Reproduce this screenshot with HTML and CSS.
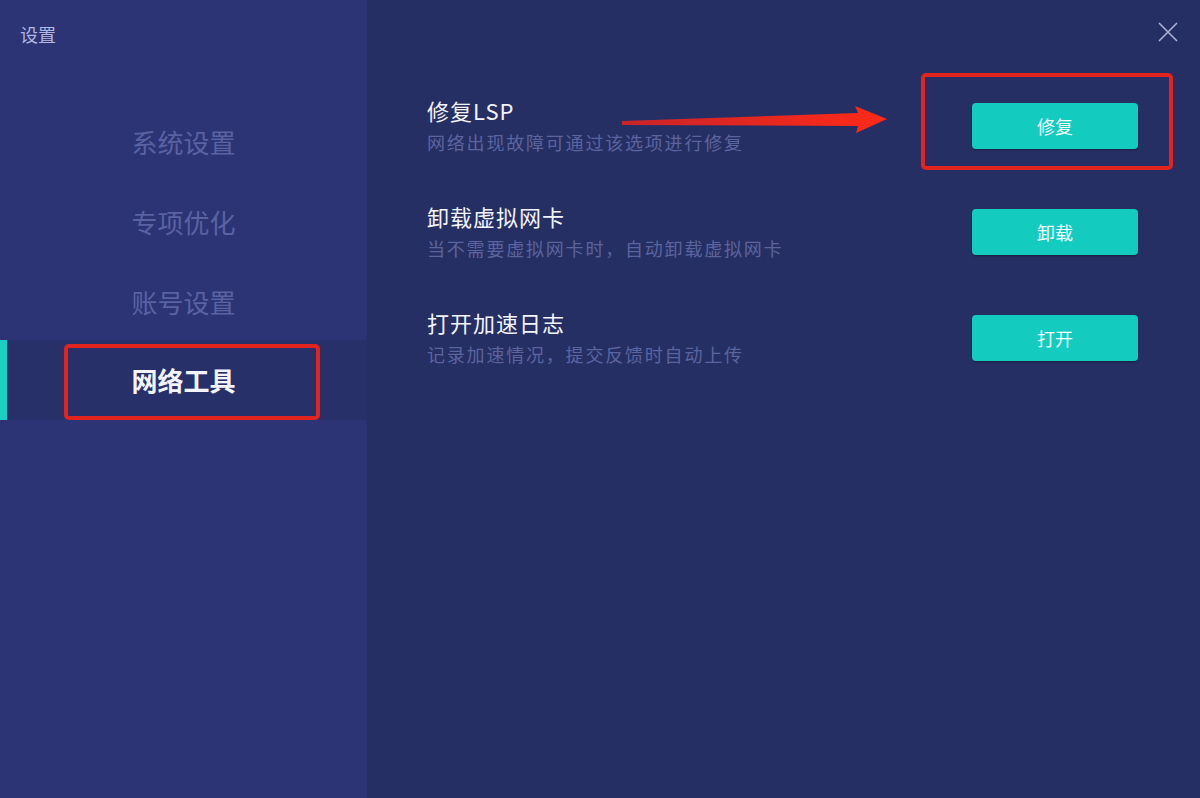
FILE: index.html
```html
<!DOCTYPE html>
<html>
<head>
  <meta charset="utf-8">
  <title>设置</title>
  <link rel="stylesheet" href="styles.css">
</head>
<body>
  <div id="window">
    <div class="sidebar">
      <div class="title">设置</div>
      <ul class="nav">
        <li>系统设置</li>
        <li>专项优化</li>
        <li>账号设置</li>
        <li class="active">网络工具<span class="mark"></span></li>
      </ul>
    </div>

    <div class="main">
      <div class="row">
        <div class="info">
          <h3>修复LSP</h3>
          <p>网络出现故障可通过该选项进行修复</p>
        </div>
        <div class="btn-wrap">
          <button>修复</button>
          <span class="mark mark-btn"></span>
        </div>
      </div>

      <div class="row">
        <div class="info">
          <h3>卸载虚拟网卡</h3>
          <p>当不需要虚拟网卡时，自动卸载虚拟网卡</p>
        </div>
        <div class="btn-wrap">
          <button>卸载</button>
        </div>
      </div>

      <div class="row">
        <div class="info">
          <h3>打开加速日志</h3>
          <p>记录加速情况，提交反馈时自动上传</p>
        </div>
        <div class="btn-wrap">
          <button>打开</button>
        </div>
      </div>

      <div class="close">
        <svg width="22" height="22" viewBox="0 0 22 22">
          <path d="M2 2 L20 20 M20 2 L2 20" stroke="#aeb2d8" stroke-width="1.6" fill="none"/>
        </svg>
      </div>
    </div>

    <!-- annotation arrow -->
    <svg class="arrow" width="1200" height="798" viewBox="0 0 1200 798">
      <defs>
        <linearGradient id="red" x1="0" y1="0" x2="1" y2="0">
          <stop offset="0" stop-color="#c8242a"/>
          <stop offset="1" stop-color="#ff2a18"/>
        </linearGradient>
      </defs>
      <polygon fill="url(#red)" points="622,121 858,113 855,106 887,119 856,133 858,126 622,125"/>
    </svg>
  </div>
</body>
</html>
```

FILE: styles.css
```css
body {
  margin: 0;
  font-family: "Noto Sans CJK SC", "Noto Sans", sans-serif;
  background: #262f63;
}
#window {
  position: relative;
  display: flex;
  width: 1200px;
  height: 798px;
  overflow: hidden;
}
.sidebar {
  width: 367px;
  background: #2d3475;
  flex-shrink: 0;
}
.title {
  padding: 21px 0 0 20px;
  height: 78px;
  box-sizing: border-box;
  font-size: 18px;
  line-height: 26px;
  color: #b3b6e0;
}
.nav {
  list-style: none;
  margin: 0;
  padding: 0;
}
.nav li {
  position: relative;
  height: 80px;
  line-height: 80px;
  text-align: center;
  font-size: 26px;
  color: #5a62a2;
}
.nav li:first-child {
  margin-top: 24px;
}
.nav li.active {
  margin-top: -2px;
  background: #283069;
  color: #f2f3fb;
  font-weight: bold;
  border-left: 7px solid #1bcfc4;
  padding-right: 7px;
}
.nav li.active .mark {
  left: 57px;
  top: 4px;
  width: 256px;
  height: 76px;
}
.mark {
  position: absolute;
  box-sizing: border-box;
  border: 4px solid #e3241e;
  border-radius: 5px;
}
.main {
  position: relative;
  flex: 1;
  background: #262f63;
  padding: 95px 62px 0 60px;
  display: flex;
  flex-direction: column;
  gap: 46px;
}
.row {
  display: flex;
  justify-content: space-between;
  align-items: center;
  height: 60px;
}
.info h3 {
  margin: 0;
  font-size: 22px;
  line-height: 30px;
  font-weight: normal;
  letter-spacing: 1px;
  color: #f2f3fb;
}
.info p {
  margin: 4px 0 0;
  font-size: 18px;
  line-height: 26px;
  letter-spacing: 1.8px;
  color: #5c649f;
}
.btn-wrap {
  position: relative;
  top: 1px;
}
button {
  display: block;
  width: 166px;
  height: 46px;
  border: none;
  border-radius: 4px;
  background: #14cbc0;
  color: #f4fffe;
  font-family: inherit;
  font-size: 18px;
  box-shadow: 0 1px 2px rgba(0,0,0,0.35);
}
.mark-btn {
  left: -51px;
  top: -30px;
  width: 252px;
  height: 97px;
}
.close {
  position: absolute;
  top: 21px;
  right: 21px;
  width: 22px;
  height: 22px;
}
.arrow {
  position: absolute;
  left: 0;
  top: 0;
  pointer-events: none;
}
```
